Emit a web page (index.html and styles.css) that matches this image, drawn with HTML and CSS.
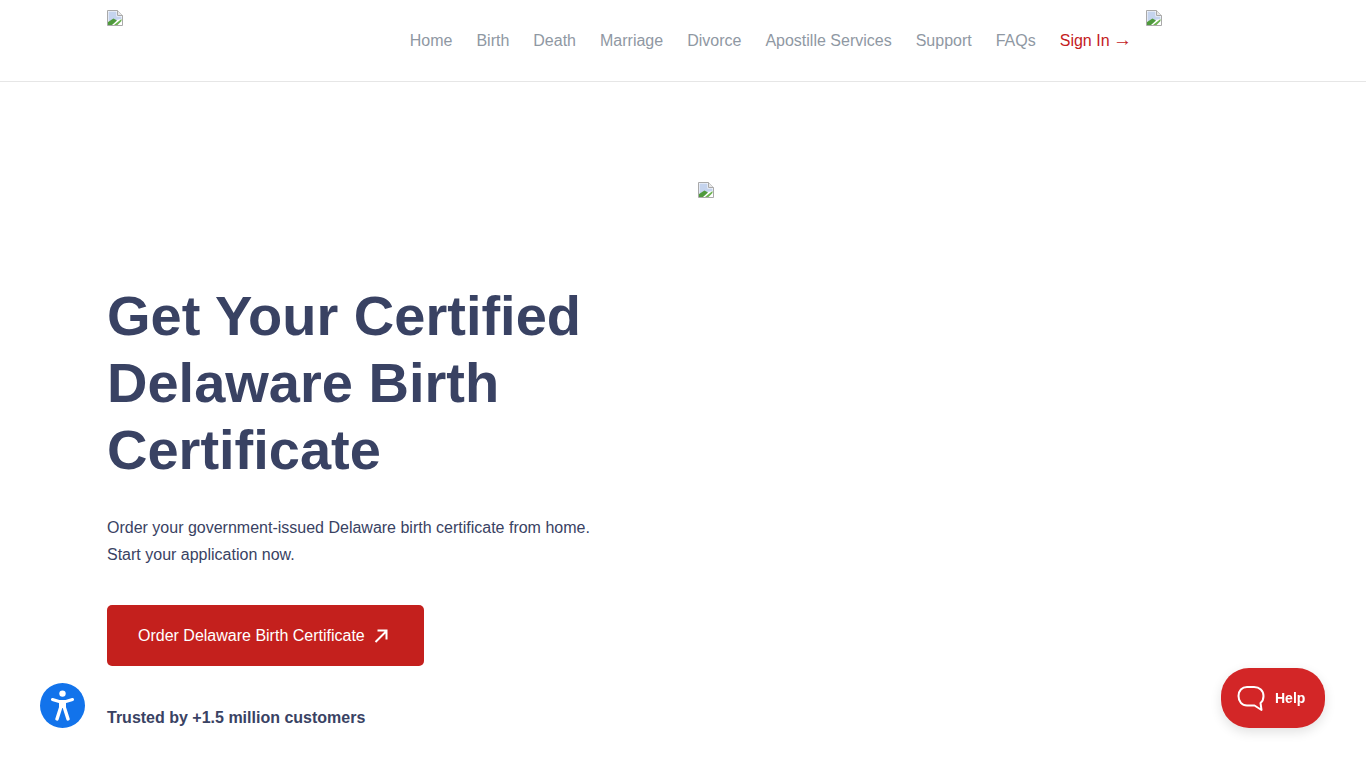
FILE: index.html
```html
<!DOCTYPE html>
<html lang="en">
<head>
    <meta charset="UTF-8" />
    <title>Delaware Birth Certificate</title>
    <link rel="stylesheet" href="styles.css">
</head>
<body>
<svg class="sprite" width="0" height="0">
    <symbol id="broken-img" viewBox="0 0 16 16">
        <path d="M0.5 0.5H10.5L15.5 5.5V15.5H0.5Z" fill="#fff" stroke="#a9a9a9"/>
        <path d="M10.5 0.5V5.5H15.5" fill="#e8e8e8" stroke="#a9a9a9"/>
        <path d="M1.5 1.5H9.5V6.5H14.5V9L1.5 11.5Z" fill="#c5d4ee"/>
        <path d="M1 15V12L6.5 8.5L10 10.5L5 15Z" fill="#4f9a3c"/>
        <path d="M7 15L14.5 9V11L10.5 15Z" fill="#6cb24f"/>
    </symbol>
</svg>

<header class="site-header">
    <div class="header-inner">
        <svg class="broken"><use href="#broken-img"/></svg>
        <nav class="main-nav">
            <a href="#">Home</a>
            <a href="#">Birth</a>
            <a href="#">Death</a>
            <a href="#">Marriage</a>
            <a href="#">Divorce</a>
            <a href="#">Apostille Services</a>
            <a href="#">Support</a>
            <a href="#">FAQs</a>
            <a href="#" class="sign-in">Sign In <span class="arrow">→</span></a>
        </nav>
        <svg class="broken"><use href="#broken-img"/></svg>
    </div>
</header>

<main class="hero">
    <div class="hero-image">
        <svg class="broken"><use href="#broken-img"/></svg>
    </div>
    <h1>Get Your Certified<br>Delaware Birth<br>Certificate</h1>
    <p class="lead">Order your government-issued Delaware birth certificate from home.<br>Start your application now.</p>
    <a href="#" class="order-btn">
        Order Delaware Birth Certificate
        <svg width="16" height="16" viewBox="0 0 16 16" fill="none" stroke="#fff" stroke-width="2"><path d="M2.5 14L13.5 3M4.5 2.5H13.5V11.5"/></svg>
    </a>
    <p class="trusted">Trusted by +1.5 million customers</p>
</main>

<button class="a11y-btn" aria-label="Accessibility">
    <svg width="23" height="31" viewBox="0 0 23 31" fill="none" stroke="#fff" stroke-linecap="round">
        <circle cx="11.5" cy="3.6" r="3.2" fill="#fff" stroke="none"/>
        <path d="M1.5 9.5L8 11.5H15L21.5 9.5" stroke-width="3"/>
        <path d="M11.5 11.5V18" stroke-width="7" stroke-linecap="butt"/>
        <path d="M9.5 18L6 29M13.5 18L17 29" stroke-width="3.4"/>
    </svg>
</button>

<button class="help-btn">
    <svg width="28" height="27" viewBox="0 0 28 27" fill="none" stroke="#fff" stroke-width="2"><path d="M10 2H17C22.5 2 26.5 5.5 26.5 11C26.5 14 25.5 16.5 23.5 18L24.5 25L17.5 20.5H10C5 20.5 1.5 16.5 1.5 11C1.5 5.5 5 2 10 2Z" stroke-linejoin="round"/></svg>
    Help
</button>
</body>
</html>
```

FILE: styles.css
```css
body {
    margin: 0;
    background-color: white;
    font-family: 'Liberation Sans', Arial, sans-serif;
    color: #394263;
    height: 768px;
    overflow: hidden;
}

a {
    text-decoration: none;
}

.sprite {
    display: block;
    height: 0;
}

.broken {
    display: block;
    width: 16px;
    height: 16px;
    flex-shrink: 0;
}

.site-header {
    height: 81px;
    border-bottom: 1px solid #e6e6e6;
}

.header-inner {
    width: 1055px;
    margin-left: 107px;
    padding-top: 10px;
    display: flex;
    justify-content: space-between;
    align-items: flex-start;
}

.main-nav {
    display: flex;
    gap: 24px;
    padding-top: 22px;
    margin-left: auto;
    margin-right: 16px;
    font-size: 16px;
    line-height: 18px;
}

.main-nav a {
    color: #8f98a3;
    white-space: nowrap;
}

.main-nav .sign-in {
    color: #c4201d;
}

.arrow {
    font-size: 19px;
    line-height: 0;
    margin-left: -1px;
    margin-right: -2px;
}

.hero {
    padding-left: 107px;
}

.hero-image {
    padding: 100px 0 0 591px;
    height: 100px;
}

h1 {
    margin: 0;
    font-size: 56px;
    line-height: 67px;
    font-weight: bold;
    color: #394263;
}

.lead {
    margin: 31px 0 0;
    font-size: 16px;
    line-height: 27px;
}

.order-btn {
    display: flex;
    align-items: center;
    gap: 8px;
    box-sizing: border-box;
    width: 317px;
    height: 61px;
    margin-top: 37px;
    padding-left: 31px;
    background-color: #c4201d;
    border-radius: 5px;
    color: white;
    font-size: 16px;
}

.trusted {
    margin: 43px 0 0;
    font-size: 16px;
    line-height: 18px;
    font-weight: bold;
}

.a11y-btn {
    position: fixed;
    left: 40px;
    top: 683px;
    width: 45px;
    height: 45px;
    padding: 0;
    border: none;
    border-radius: 50%;
    background-color: #1273eb;
    display: flex;
    align-items: center;
    justify-content: center;
}

.help-btn {
    position: fixed;
    left: 1221px;
    top: 668px;
    width: 104px;
    height: 60px;
    padding: 0 0 0 16px;
    border: none;
    border-radius: 28px;
    background-color: #d32627;
    box-shadow: 0 4px 12px rgba(0, 0, 0, 0.12);
    color: white;
    font-family: 'Liberation Sans', sans-serif;
    font-size: 14px;
    font-weight: bold;
    display: flex;
    align-items: center;
    gap: 10px;
}
```
